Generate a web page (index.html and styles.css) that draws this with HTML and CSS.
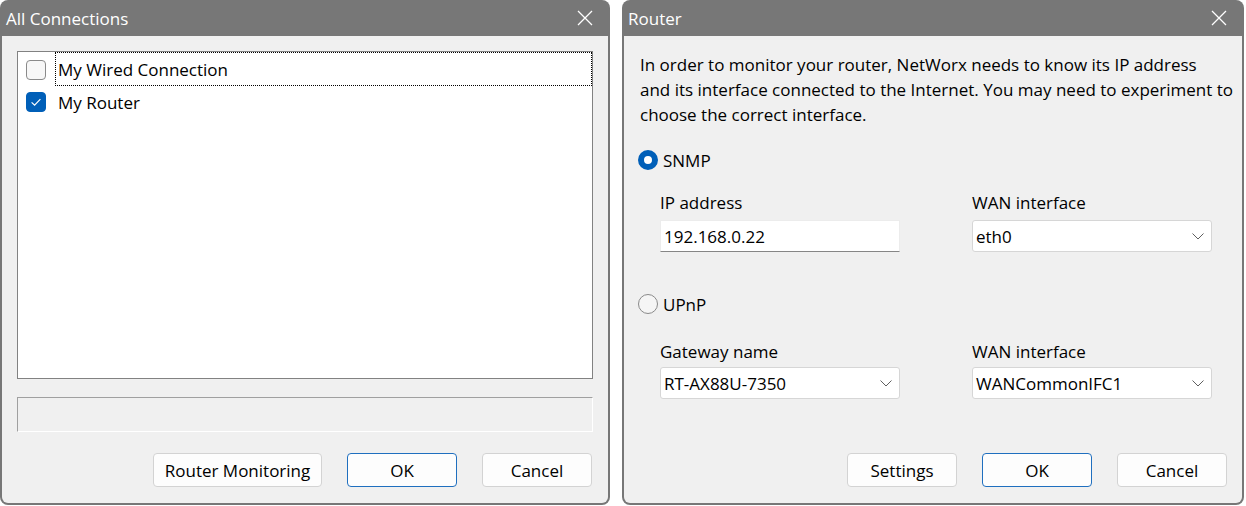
FILE: index.html
```html
<!DOCTYPE html>
<html lang="en">
<head>
<meta charset="utf-8">
<title>NetWorx dialogs</title>
<link rel="stylesheet" href="styles.css">
</head>
<body>
<div class="desk">
  <section class="win win-conn">
    <header class="titlebar">
      <span class="title">All Connections</span>
      <svg class="close" width="16" height="16" viewBox="0 0 16 16"><path d="M1 1 L15 15 M15 1 L1 15" stroke="#fff" stroke-width="1.3" fill="none"/></svg>
    </header>
    <div class="body">
      <div class="listbox">
        <div class="row">
          <span class="cb"></span>
          <span class="row-label focus">My Wired Connection</span>
        </div>
        <div class="row">
          <span class="cb checked"><svg width="20" height="20" viewBox="0 0 20 20"><path d="M5.6 10.4 L8.6 13.2 L14.4 7.2" stroke="#fff" stroke-width="1.2" fill="none"/></svg></span>
          <span class="row-label">My Router</span>
        </div>
      </div>
      <div class="status"></div>
      <div class="footer">
        <button class="btn btn-wide">Router Monitoring</button>
        <button class="btn btn-default">OK</button>
        <button class="btn">Cancel</button>
      </div>
    </div>
  </section>

  <section class="win win-router">
    <header class="titlebar">
      <span class="title">Router</span>
      <svg class="close" width="16" height="16" viewBox="0 0 16 16"><path d="M1 1 L15 15 M15 1 L1 15" stroke="#fff" stroke-width="1.3" fill="none"/></svg>
    </header>
    <div class="body router-body">
      <p class="para">In order to monitor your router, NetWorx needs to know its IP address<br>and its interface connected to the Internet. You may need to experiment to<br>choose the correct interface.</p>

      <div class="radio-row first-radio">
        <span class="radio on"></span><span class="radio-label">SNMP</span>
      </div>
      <div class="fields fields-snmp">
        <div class="field">
          <span class="label">IP address</span>
          <div class="input">192.168.0.22</div>
        </div>
        <div class="field">
          <span class="label">WAN interface</span>
          <div class="select">eth0<svg class="chev" width="12" height="7" viewBox="0 0 12 7"><path d="M0.5 0.5 L6 6 L11.5 0.5" stroke="#5f5f5f" stroke-width="1" fill="none"/></svg></div>
        </div>
      </div>

      <div class="radio-row second-radio">
        <span class="radio"></span><span class="radio-label">UPnP</span>
      </div>
      <div class="fields fields-upnp">
        <div class="field">
          <span class="label">Gateway name</span>
          <div class="select">RT-AX88U-7350<svg class="chev" width="12" height="7" viewBox="0 0 12 7"><path d="M0.5 0.5 L6 6 L11.5 0.5" stroke="#5f5f5f" stroke-width="1" fill="none"/></svg></div>
        </div>
        <div class="field">
          <span class="label">WAN interface</span>
          <div class="select">WANCommonIFC1<svg class="chev" width="12" height="7" viewBox="0 0 12 7"><path d="M0.5 0.5 L6 6 L11.5 0.5" stroke="#5f5f5f" stroke-width="1" fill="none"/></svg></div>
        </div>
      </div>

      <div class="footer">
        <button class="btn">Settings</button>
        <button class="btn btn-default">OK</button>
        <button class="btn">Cancel</button>
      </div>
    </div>
  </section>
</div>
</body>
</html>
```

FILE: styles.css
```css
html, body {
  margin: 0;
  padding: 0;
  background: #ffffff;
}
body {
  font-family: "Open Sans", "Noto Sans", "Liberation Sans", sans-serif;
  font-size: 17px;
  color: #000;
}
.desk {
  display: flex;
  gap: 12px;
  width: 1246px;
  height: 506px;
}
.win {
  display: flex;
  flex-direction: column;
  height: 505px;
  background: #777777;
  border-radius: 8px;
  padding: 0 2px 2px 2px;
  box-sizing: border-box;
}
.win-conn { width: 610px; }
.win-router { width: 622px; }

.titlebar {
  height: 36px;
  flex: none;
  display: flex;
  align-items: center;
  justify-content: space-between;
  padding: 0 15px 0 4px;
  color: #fff;
}
.title {
  font-size: 17px;
}
.close { display: block; }

.body {
  flex: 1;
  background: #f0f0f0;
  border-radius: 0 0 6px 6px;
  display: flex;
  flex-direction: column;
  padding: 15px 15px 16px 15px;
}

/* list box */
.listbox {
  height: 328px;
  box-sizing: border-box;
  border: 1px solid #828282;
  background: #fff;
  padding-top: 2px;
}
.row {
  height: 32px;
  display: flex;
  align-items: center;
}
.cb {
  width: 20px;
  height: 20px;
  box-sizing: border-box;
  margin-left: 8px;
  margin-right: 9px;
  border: 1px solid #8a8a8a;
  border-radius: 4px;
  background: #f7f7f7;
  flex: none;
  display: flex;
}
.cb.checked {
  background: #005fb8;
  border-color: #005fb8;
}
.cb svg { display: block; margin: -1px; }
.row-label {
  padding-left: 2px;
  font-size: 17px;
  border: 1px solid transparent;
}
.row-label.focus {
  flex: 1;
  align-self: flex-start;
  height: 34px;
  box-sizing: border-box;
  margin-top: -2px;
  margin-right: 0;
  border: 1px dotted #000;
  display: flex;
  align-items: center;
}

.status {
  margin-top: 18px;
  height: 35px;
  box-sizing: border-box;
  border-top: 1px solid #a0a0a0;
  border-left: 1px solid #a0a0a0;
  border-right: 1px solid #fff;
  border-bottom: 1px solid #fff;
}

.footer {
  margin-top: auto;
  display: flex;
  justify-content: flex-end;
  gap: 25px;
  padding-right: 1px;
}
.btn {
  width: 110px;
  height: 34px;
  box-sizing: border-box;
  border: 1px solid #d3d3d3;
  border-radius: 4px;
  background: #fdfdfd;
  font-family: inherit;
  font-size: 17px;
  color: #000;
  padding: 0;
}
.btn-wide { width: 169px; }
.btn-default { border-color: #1f6fbf; }

/* router window */
.router-body {
  padding: 16px 14px 16px 16px;
}
.para {
  margin: 0;
  line-height: 25px;
  font-size: 17px;
  white-space: nowrap;
}
.radio-row {
  height: 24px;
  display: flex;
  align-items: center;
  margin-left: -2px;
}
.first-radio { margin-top: 21px; }
.second-radio { margin-top: 40px; }
.radio {
  width: 20px;
  height: 20px;
  box-sizing: border-box;
  border-radius: 50%;
  border: 1px solid #8a8a8a;
  background: #f5f5f5;
  margin-right: 5px;
  flex: none;
}
.radio.on {
  border: 6px solid #005fb8;
  background: #fff;
}
.radio-label {
  font-size: 17px;
}
.fields {
  display: grid;
  grid-template-columns: 240px 240px;
  column-gap: 72px;
  padding-left: 20px;
}
.fields-snmp { margin-top: 19px; }
.fields-upnp { margin-top: 24px; }
.field {
  display: flex;
  flex-direction: column;
}
.label {
  height: 24px;
  line-height: 24px;
  font-size: 17px;
  margin-bottom: 5px;
}
.fields-upnp .label { margin-bottom: 3px; }
.input, .select {
  height: 32px;
  box-sizing: border-box;
  background: #fff;
  display: flex;
  align-items: center;
  padding-left: 3px;
  font-size: 17px;
}
.input {
  border: 1px solid #ececec;
  border-bottom: 1px solid #868686;
}
.select {
  border: 1px solid #d6d6d6;
  border-radius: 3px;
  justify-content: space-between;
  padding-right: 7px;
}
.chev { display: block; }
```
